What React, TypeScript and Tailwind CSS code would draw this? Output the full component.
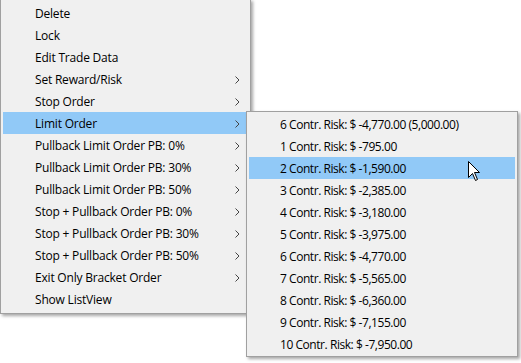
import React from 'react';

const MAIN = [
  { label: 'Delete' },
  { label: 'Lock' },
  { label: 'Edit Trade Data' },
  { label: 'Set Reward/Risk', sub: true },
  { label: 'Stop Order', sub: true },
  { label: 'Limit Order', sub: true, active: true },
  { label: 'Pullback Limit Order PB: 0%', sub: true },
  { label: 'Pullback Limit Order PB: 30%', sub: true },
  { label: 'Pullback Limit Order PB: 50%', sub: true },
  { label: 'Stop + Pullback Order PB: 0%', sub: true },
  { label: 'Stop + Pullback Order PB: 30%', sub: true },
  { label: 'Stop + Pullback Order PB: 50%', sub: true },
  { label: 'Exit Only Bracket Order', sub: true },
  { label: 'Show ListView' },
];

const RISK = [
  '6 Contr. Risk: $ -4,770.00 (5,000.00)',
  '1 Contr. Risk: $ -795.00',
  '2 Contr. Risk: $ -1,590.00',
  '3 Contr. Risk: $ -2,385.00',
  '4 Contr. Risk: $ -3,180.00',
  '5 Contr. Risk: $ -3,975.00',
  '6 Contr. Risk: $ -4,770.00',
  '7 Contr. Risk: $ -5,565.00',
  '8 Contr. Risk: $ -6,360.00',
  '9 Contr. Risk: $ -7,155.00',
  '10 Contr. Risk: $ -7,950.00',
];

const Chevron = () => (
  <svg width="5" height="8" viewBox="0 0 5 8" className="shrink-0">
    <path d="M0.5 0.5 L4 4 L0.5 7.5" fill="none" stroke="#444" strokeWidth="1" />
  </svg>
);

const Cursor = () => (
  <svg width="13" height="21" viewBox="0 0 13 21" className="absolute left-[468px] top-[161px]">
    <path
      d="M0.5 0.5 L0.5 16.5 L4.5 12.5 L7.5 19.5 L9.5 18.5 L6.5 11.5 L11.5 11.5 Z"
      fill="#fff"
      stroke="#000"
      strokeWidth="1"
    />
  </svg>
);

export default function App() {
  return (
    <div
      className="relative w-[521px] h-[363px] bg-white overflow-hidden text-[12px] tracking-[-0.2px] text-black"
      style={{ fontFamily: '"Open Sans", "Noto Sans", sans-serif' }}
    >
      {/* main context menu */}
      <div className="absolute left-0 top-[-1px] w-[251px] border border-[#a0a0a0] bg-[#f0f0f0] px-[2px] pt-[2px] pb-[3px] shadow-[2px_2px_3px_rgba(0,0,0,0.35)]">
        {MAIN.map(item => (
          <div
            key={item.label}
            className={
              'flex items-center h-[22px] pl-[32px] pr-[8px] pt-[1px] ' +
              (item.active ? 'bg-[#91c9f7]' : '')
            }
          >
            <span className="flex-1 whitespace-nowrap">{item.label}</span>
            {item.sub && <Chevron />}
          </div>
        ))}
      </div>

      {/* limit order submenu */}
      <div className="absolute left-[246px] top-[111px] w-[272px] border border-[#a0a0a0] bg-[#f0f0f0] px-[2px] py-[1px] tracking-[-0.45px] shadow-[2px_2px_3px_rgba(0,0,0,0.35)]">
        {RISK.map((r, i) => (
          <div
            key={i}
            className={'flex items-center h-[22px] pl-[31px] pt-[1px] ' + (i === 2 ? 'bg-[#91c9f7]' : '')}
          >
            <span className="whitespace-nowrap">{r}</span>
          </div>
        ))}
      </div>

      <Cursor />
    </div>
  );
}
